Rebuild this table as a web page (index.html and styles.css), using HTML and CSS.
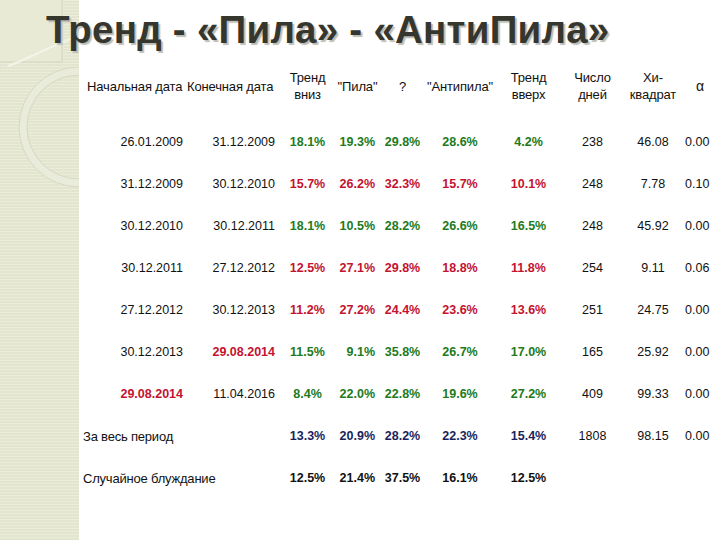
FILE: index.html
```html
<!DOCTYPE html>
<html lang="ru">
<head>
<meta charset="utf-8">
<title>Тренд - «Пила» - «АнтиПила»</title>
<link rel="stylesheet" href="styles.css">
</head>
<body>
<div class="deco" aria-hidden="true">
  <svg width="79" height="540" viewBox="0 0 79 540">
    <defs>
      <pattern id="stripes" width="4" height="3" patternUnits="userSpaceOnUse">
        <rect width="4" height="3" fill="#e2e4cd"/>
        <rect width="4" height="1" fill="#eceedc"/>
        <rect x="3" width="1" height="3" fill="#e6e8d3"/>
      </pattern>
    </defs>
    <rect width="79" height="540" fill="url(#stripes)"/>
    <rect x="-1" y="-1" width="63" height="63" fill="#e8ead6" stroke="#d2d4bd" stroke-width="1"/>
    <path d="M8 66 C 30 58, 55 44, 79 36" fill="none" stroke="#f3f4e8" stroke-width="2"/>
    <circle cx="79" cy="127" r="56" fill="none" stroke="#eaecdb" stroke-width="8"/>
    <circle cx="79" cy="127" r="60" fill="none" stroke="#d6d8c3" stroke-width="1"/>
    <circle cx="79" cy="127" r="52" fill="none" stroke="#d6d8c3" stroke-width="1"/>
  </svg>
</div>
<div class="slide">
  <h1 class="title">Тренд - «Пила» - «АнтиПила»</h1>
  <div class="grid">
    <div class="h h-left">Начальная дата</div>
    <div class="h h-left2">Конечная дата</div>
    <div class="h">Тренд<br>вниз</div>
    <div class="h">"Пила"</div>
    <div class="h">?</div>
    <div class="h">"Антипила"</div>
    <div class="h">Тренд<br>вверх</div>
    <div class="h">Число<br>дней</div>
    <div class="h">Хи-<br>квадрат</div>
    <div class="h alpha">α</div>

    <div class="spacer"></div>

    <div class="d d1">26.01.2009</div><div class="d d2">31.12.2009</div>
    <div class="p c g">18.1%</div><div class="p r g">19.3%</div><div class="p c g">29.8%</div><div class="p c g">28.6%</div><div class="p c g">4.2%</div>
    <div class="n">238</div><div class="n">46.08</div><div class="n last">0.00</div>

    <div class="d d1">31.12.2009</div><div class="d d2">30.12.2010</div>
    <div class="p c red">15.7%</div><div class="p r red">26.2%</div><div class="p c red">32.3%</div><div class="p c red">15.7%</div><div class="p c red">10.1%</div>
    <div class="n">248</div><div class="n">7.78</div><div class="n last">0.10</div>

    <div class="d d1">30.12.2010</div><div class="d d2">30.12.2011</div>
    <div class="p c g">18.1%</div><div class="p r g">10.5%</div><div class="p c g">28.2%</div><div class="p c g">26.6%</div><div class="p c g">16.5%</div>
    <div class="n">248</div><div class="n">45.92</div><div class="n last">0.00</div>

    <div class="d d1">30.12.2011</div><div class="d d2">27.12.2012</div>
    <div class="p c red">12.5%</div><div class="p r red">27.1%</div><div class="p c red">29.8%</div><div class="p c red">18.8%</div><div class="p c red">11.8%</div>
    <div class="n">254</div><div class="n">9.11</div><div class="n last">0.06</div>

    <div class="d d1">27.12.2012</div><div class="d d2">30.12.2013</div>
    <div class="p c red">11.2%</div><div class="p r red">27.2%</div><div class="p c red">24.4%</div><div class="p c red">23.6%</div><div class="p c red">13.6%</div>
    <div class="n">251</div><div class="n">24.75</div><div class="n last">0.00</div>

    <div class="d d1">30.12.2013</div><div class="d d2 hl">29.08.2014</div>
    <div class="p c g">11.5%</div><div class="p r g">9.1%</div><div class="p c g">35.8%</div><div class="p c g">26.7%</div><div class="p c g">17.0%</div>
    <div class="n">165</div><div class="n">25.92</div><div class="n last">0.00</div>

    <div class="d d1 hl">29.08.2014</div><div class="d d2">11.04.2016</div>
    <div class="p c g">8.4%</div><div class="p r g">22.0%</div><div class="p c g">22.8%</div><div class="p c g">19.6%</div><div class="p c g">27.2%</div>
    <div class="n">409</div><div class="n">99.33</div><div class="n last">0.00</div>

    <div class="label">За весь период</div>
    <div class="p c navy">13.3%</div><div class="p r navy">20.9%</div><div class="p c navy">28.2%</div><div class="p c navy">22.3%</div><div class="p c navy">15.4%</div>
    <div class="n">1808</div><div class="n">98.15</div><div class="n last">0.00</div>

    <div class="label">Случайное блуждание</div>
    <div class="p c blk">12.5%</div><div class="p r blk">21.4%</div><div class="p c blk">37.5%</div><div class="p c blk">16.1%</div><div class="p c blk">12.5%</div>
    <div></div><div></div><div></div>
  </div>
</div>
</body>
</html>
```
FILE: styles.css
```css
html, body {
  margin: 0;
  padding: 0;
}
body {
  width: 720px;
  height: 540px;
  overflow: hidden;
  background: #ffffff;
  position: relative;
  font-family: "Liberation Sans", Arial, sans-serif;
  color: #111;
}
.deco {
  position: absolute;
  left: 0;
  top: 0;
  width: 79px;
  height: 540px;
}
.deco svg {
  display: block;
}
.slide {
  position: relative;
  padding-top: 8px;
}
.title {
  margin: 0 0 0 46px;
  font-family: "Liberation Sans", Arial, sans-serif;
  font-weight: bold;
  font-size: 38.5px;
  line-height: 44px;
  letter-spacing: 0.25px;
  color: #35362e;
  text-shadow: 2px 2px 1px #bdbdb8;
  white-space: nowrap;
}
.grid {
  margin: 13px 0 0 80px;
  display: grid;
  grid-template-columns: 107px 93px 55px 45px 45px 70px 67px 61px 60px 37px;
  grid-template-rows: 42px 14px;
  grid-auto-rows: 42px;
  align-items: center;
}
.spacer {
  grid-column: 1 / -1;
  height: 14px;
}
.h {
  font-size: 13px;
  line-height: 17px;
  text-align: center;
  color: #111;
  white-space: nowrap;
  letter-spacing: -0.15px;
}
.h-left {
  text-align: left;
  padding-left: 7px;
}
.h-left2 {
  text-align: left;
  padding-left: 0;
}
.alpha {
  font-size: 14px;
  text-align: left;
  padding-left: 13px;
}
.d, .p, .n, .label {
  font-size: 12.5px;
  white-space: nowrap;
}
.d1 {
  text-align: right;
  padding-right: 4px;
}
.d2 {
  text-align: right;
  padding-right: 5px;
}
.hl {
  color: #c41230;
  font-weight: bold;
}
.p {
  font-weight: bold;
}
.c {
  text-align: center;
}
.r {
  text-align: right;
  padding-right: 5px;
}
.g {
  color: #217a21;
}
.red {
  color: #c41230;
}
.navy {
  color: #1b1f5e;
}
.blk {
  color: #111;
}
.n {
  text-align: center;
  color: #111;
}
.n.last {
  text-align: left;
  padding-left: 2px;
}
.label {
  grid-column: 1 / span 2;
  padding-left: 3px;
  font-size: 13px;
  letter-spacing: -0.2px;
}
```
